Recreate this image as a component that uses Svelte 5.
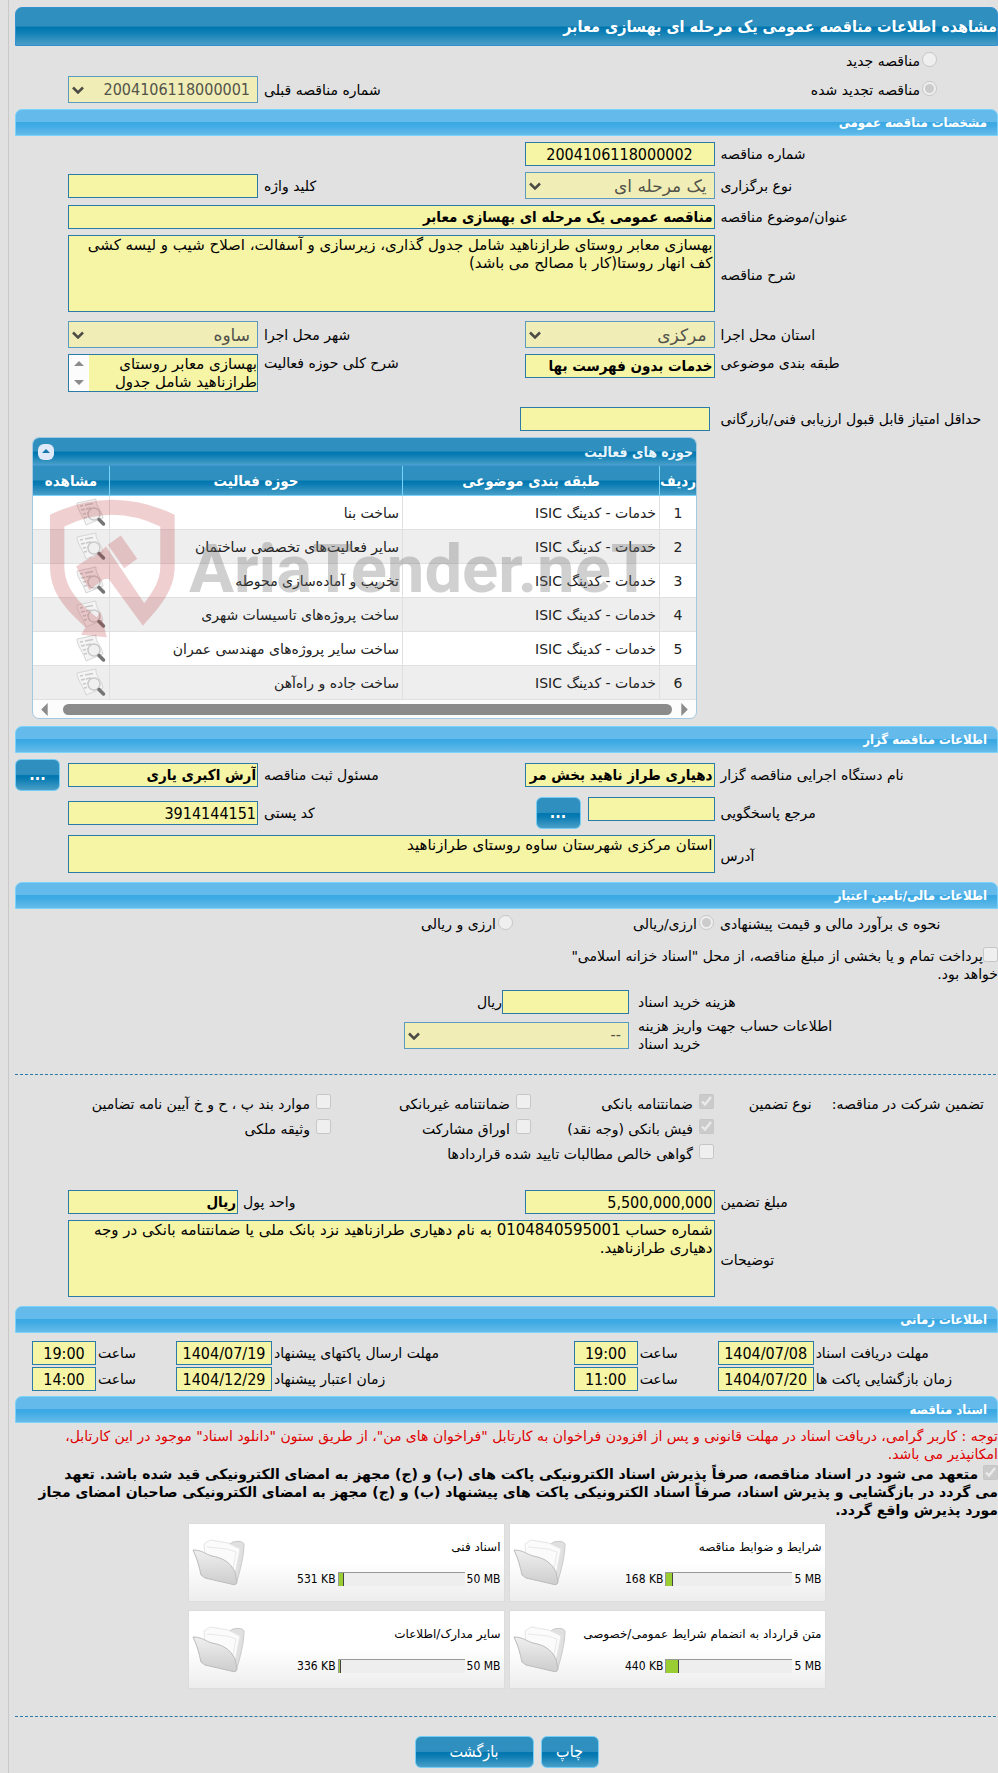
<script>
  const desc = 'بهسازی معابر روستای طرازناهید شامل جدول گذاری، زیرسازی و آسفالت، اصلاح شیب و لیسه کشی\nکف انهار روستا(کار با مصالح می باشد)';
  const scope = 'بهسازی معابر روستای\nطرازناهید شامل جدول';
  const address = 'استان مرکزی شهرستان ساوه روستای طرازناهید';
  const notes = 'شماره حساب 0104840595001 به نام دهیاری طرازناهید نزد بانک ملی یا ضمانتنامه بانکی در وجه\nدهیاری طرازناهید.';

  const areas = [
    'ساخت بنا',
    'سایر فعالیت‌های تخصصی ساختمان',
    'تخریب و آماده‌سازی محوطه',
    'ساخت پروژه‌های تاسیسات شهری',
    'ساخت سایر پروژه‌های مهندسی عمران',
    'ساخت جاده و راه‌آهن'
  ];

  const guarantees = [
    { id: 'g1', label: 'ضمانتنامه بانکی', checked: true },
    { id: 'g2', label: 'ضمانتنامه غیربانکی', checked: false },
    { id: 'g3', label: 'موارد بند پ ، ح و خ آیین نامه تضامین', checked: false },
    { id: 'g4', label: 'فیش بانکی (وجه نقد)', checked: true },
    { id: 'g5', label: 'اوراق مشارکت', checked: false },
    { id: 'g6', label: 'وثیقه ملکی', checked: false },
    { id: 'g7', label: 'گواهی خالص مطالبات تایید شده قراردادها', checked: false, wide: true }
  ];

  const dates = [
    { id: 'd1', label: 'مهلت دریافت اسناد', date: '1404/07/08', time: '19:00' },
    { id: 'd2', label: 'مهلت ارسال پاکتهای پیشنهاد', date: '1404/07/19', time: '19:00' },
    { id: 'd3', label: 'زمان بازگشایی پاکت ها', date: '1404/07/20', time: '11:00' },
    { id: 'd4', label: 'زمان اعتبار پیشنهاد', date: '1404/12/29', time: '14:00' }
  ];

  const files = [
    { title: 'شرایط و ضوابط مناقصه', max: '5 MB', used: '168 KB', fill: 5 },
    { title: 'اسناد فنی', max: '50 MB', used: '531 KB', fill: 4 },
    { title: 'متن قرارداد به انضمام شرایط عمومی/خصوصی', max: '5 MB', used: '440 KB', fill: 10 },
    { title: 'سایر مدارک/اطلاعات', max: '50 MB', used: '336 KB', fill: 2 }
  ];
</script>

{#snippet dropdown(id, value, number = false)}
  <span class="dropdown">
    <select {id} class:num={number} disabled><option>{value}</option></select>
    <svg class="chevron" viewBox="0 0 12 8" aria-hidden="true"><path d="M1 1.500 6 6.500l5-5" /></svg>
  </span>
{/snippet}

{#snippet docIcon()}
  <svg class="doc" viewBox="0 0 30 30" aria-hidden="true">
    <path d="M1 5 20 1c-1 7 6 11 7 19l-17 7C8 19 1 12 1 5z" fill="#f4f4f4" stroke="#d6d6d6" />
    <path d="M4 8l3-.6M5 12l4-.8M7 16l3-.6M8 20l3-.6M9 7l8-1.600M10 11l5-.9M11 15l2-.4" stroke="#c9c9c9" stroke-width="1.500" />
    <circle cx="18" cy="16" r="6" fill="#efefef" fill-opacity=".85" stroke="#cacaca" stroke-width="1.500" />
    <path d="M23 21.500 27.500 26" stroke="#757575" stroke-width="3.500" stroke-linecap="round" />
  </svg>
{/snippet}

<svelte:head><title>مناقصه عمومی</title></svelte:head>

<main dir="rtl">
  <h1>مشاهده اطلاعات مناقصه عمومی یک مرحله ای بهسازی معابر</h1>

  <div class="kind">
    <span class="opt"><input type="radio" id="new" name="kind" disabled /><label for="new">مناقصه جدید</label></span>
    <span class="opt"><input type="radio" id="renewed" name="kind" checked disabled /><label for="renewed">مناقصه تجدید شده</label></span>
    <label class="end" for="prev">شماره مناقصه قبلی</label>
    {@render dropdown('prev', '2004106118000001', true)}
  </div>

  <section class="specs">
    <h2>مشخصات مناقصه عمومی</h2>
    <div class="form">
      <label for="num">شماره مناقصه</label>
      <input class="center num" id="num" value="2004106118000002" readonly />

      <label class="first" for="type">نوع برگزاری</label>
      {@render dropdown('type', 'یک مرحله ای')}
      <label for="key">کلید واژه</label>
      <input id="key" readonly />

      <label class="first" for="subject">عنوان/موضوع مناقصه</label>
      <input class="full strong" id="subject" value="مناقصه عمومی یک مرحله ای بهسازی معابر" readonly />

      <label class="first" for="desc">شرح مناقصه</label>
      <textarea class="full tall" id="desc" readonly value={desc}></textarea>

      <label class="first" for="province">استان محل اجرا</label>
      {@render dropdown('province', 'مرکزی')}
      <label for="city">شهر محل اجرا</label>
      {@render dropdown('city', 'ساوه')}

      <label class="first top" for="class">طبقه بندی موضوعی</label>
      <input class="top strong" id="class" value="خدمات بدون فهرست بها" readonly />
      <label class="top" for="scope">شرح کلی حوزه فعالیت</label>
      <div class="scroller">
        <textarea id="scope" readonly value={scope}></textarea>
        <svg viewBox="0 0 20 36" aria-hidden="true"><path d="M5 11h10l-5-5zM5 25h10l-5 5z" /></svg>
      </div>

      <label class="first score" for="score">حداقل امتیاز قابل قبول ارزیابی فنی/بازرگانی</label>
      <span class="score-field"><input id="score" readonly /></span>
    </div>

    <div class="panel">
      <div class="panel-title">
        <span>حوزه های فعالیت</span>
        <button class="collapse" aria-label="بستن">
          <svg viewBox="0 0 16 16"><path d="M4 9 8 5l4 4z" /></svg>
        </button>
      </div>
      <table>
        <thead>
          <tr>
            <th class="c-row">ردیف</th>
            <th class="c-class">طبقه بندی موضوعی</th>
            <th>حوزه فعالیت</th>
            <th class="c-view">مشاهده</th>
          </tr>
        </thead>
        <tbody>
          {#each areas as area, i}
            <tr>
              <td class="idx">{i + 1}</td>
              <td>خدمات - کدینگ ISIC</td>
              <td>{area}</td>
              <td class="view">{@render docIcon()}</td>
            </tr>
          {/each}
        </tbody>
      </table>
      <div class="hscroll" aria-hidden="true">
        <svg viewBox="0 0 8 14"><path d="M0 0v14l7-7z" /></svg>
        <span></span>
        <svg viewBox="0 0 8 14"><path d="M8 0v14L1 7z" /></svg>
      </div>

      <!-- Site watermark over the rows -->
      <div class="watermark" dir="ltr" aria-hidden="true">
        <svg viewBox="150 208 374 416">
          <path d="M150 255Q335 166 523 255V410C523 480 480 530 428 587L325 447 307 448 272 388 318 350 432 520C462 480 480 450 480 410V290Q335 220 193 290V410C193 465 225 510 290 562L300 545 320 622 243 614 256 592C200 540 150 490 150 410z" />
          <path d="M228 410 275 380 315 445 268 480zM323 345 362 317 411 387 372 415z" />
        </svg>
        <span>AriaTender.neT</span>
      </div>
    </div>
  </section>

  <section>
    <h2>اطلاعات مناقصه گزار</h2>
    <div class="form">
      <label for="org">نام دستگاه اجرایی مناقصه گزار</label>
      <input class="strong" id="org" value="دهیاری طراز ناهید بخش مر" readonly />
      <label for="owner">مسئول ثبت مناقصه</label>
      <input class="strong" id="owner" value="آرش اکبری یاری" readonly />
      <button class="btn more">...</button>

      <label class="first" for="contact">مرجع پاسخگویی</label>
      <div class="pair">
        <input id="contact" readonly />
        <button class="btn more">...</button>
      </div>
      <label for="zip">کد پستی</label>
      <input class="num" id="zip" value="3914144151" readonly />

      <label class="first" for="address">آدرس</label>
      <textarea class="full low" id="address" readonly value={address}></textarea>
    </div>
  </section>

  <section>
    <h2>اطلاعات مالی/تامین اعتبار</h2>
    <div class="estimate">
      <span class="lead">نحوه ی برآورد مالی و قیمت پیشنهادی</span>
      <span class="opt"><input type="radio" id="cur1" name="cur" checked disabled /><label for="cur1">ارزی/ریالی</label></span>
      <span class="opt"><input type="radio" id="cur2" name="cur" disabled /><label for="cur2">ارزی و ریالی</label></span>
    </div>

    <div class="treasury">
      <input type="checkbox" id="treasury" disabled /><label for="treasury">پرداخت تمام و یا بخشی از مبلغ مناقصه، از محل "اسناد خزانه اسلامی" خواهد بود.</label>
    </div>

    <div class="cost">
      <label for="cost">هزینه خرید اسناد</label>
      <div class="pair tight"><input id="cost" readonly /><span>ریال</span></div>
      <label for="account">اطلاعات حساب جهت واریز هزینه خرید اسناد</label>
      {@render dropdown('account', '--', true)}
    </div>

    <hr />

    <div class="guarantee">
      <div class="heads"><span>تضمین شرکت در مناقصه:</span><span>نوع تضمین</span></div>
      <div class="checks">
        {#each guarantees as g}
          <span class="opt" class:wide={g.wide}>
            <input type="checkbox" id={g.id} checked={g.checked} disabled /><label for={g.id}>{g.label}</label>
          </span>
        {/each}
      </div>
    </div>

    <div class="form">
      <label for="amount">مبلغ تضمین</label>
      <input class="num" id="amount" value="5,500,000,000" readonly />
      <div class="unit">
        <label for="unit">واحد پول</label>
        <input class="strong" id="unit" value="ریال" readonly />
      </div>

      <label class="first" for="notes">توضیحات</label>
      <textarea class="full tall" id="notes" readonly value={notes}></textarea>
    </div>
  </section>

  <section>
    <h2>اطلاعات زمانی</h2>
    <div class="dates">
      {#each dates as d, i}
        <label class:first={i % 2 === 0} for={d.id}>{d.label}</label>
        <input class="center num" id={d.id} value={d.date} readonly />
        <label for="{d.id}-time">ساعت</label>
        <input class="center num" id="{d.id}-time" value={d.time} readonly />
      {/each}
    </div>
  </section>

  <section>
    <h2>اسناد مناقصه</h2>
    <p class="warning">
      توجه : کاربر گرامی، دریافت اسناد در مهلت قانونی و پس از افزودن فراخوان به کارتابل "فراخوان های من"، از طریق ستون "دانلود اسناد" موجود در این کارتابل، امکانپذیر می باشد.
    </p>
    <div class="pledge">
      <input type="checkbox" id="pledge" checked disabled />
      <label for="pledge">متعهد می شود در اسناد مناقصه، صرفاً پذیرش اسناد الکترونیکی پاکت های (ب) و (ج) مجهز به امضای الکترونیکی قید شده باشد. تعهد<br />می گردد در بازگشایی و پذیرش اسناد، صرفاً اسناد الکترونیکی پاکت های پیشنهاد (ب) و (ج) مجهز به امضای الکترونیکی صاحبان امضای مجاز مورد پذیرش واقع گردد.</label>
    </div>

    <div class="files">
      {#each files as f}
        <div class="file">
          <div class="info">
            <span>{f.title}</span>
            <div class="usage">
              <span dir="ltr">{f.max}</span>
              <div class="meter"><div class="fill" style="width:{f.fill}%"></div></div>
              <span dir="ltr">{f.used}</span>
            </div>
          </div>
          <svg class="folder" viewBox="0 0 54 50" aria-hidden="true">
            <defs>
              <linearGradient id="front" x1="0" y1="0" x2="0" y2="1">
                <stop offset="0" stop-color="#efefef" />
                <stop offset="1" stop-color="#cdcdcd" />
              </linearGradient>
            </defs>
            <path d="M36 7 41 4Q50 2 52 6C52 18 48 33 44 46L14 36z" fill="#e0e0e0" stroke="#cacaca" />
            <path d="M12 6 18 2l18 3 12 6-6 30-28-8z" fill="#fbfbfb" stroke="#e6e6e6" />
            <path d="M15 9l20 2 9 3-4 22" fill="none" stroke="#e9e9e9" />
            <path d="M1 12C10 12 13 16 20 18 31 20 38 24 43 34L45 44Q44 48 39 46L13 40 9 37C7 28 5 20 1 12z" fill="url(#front)" stroke="#bcbcbc" />
          </svg>
        </div>
      {/each}
    </div>
  </section>

  <hr class="last" />

  <footer>
    <button class="btn print">چاپ</button>
    <button class="btn back">بازگشت</button>
  </footer>
</main>

<style>
  :global(body) {
    background: #e1e1e1;
    overflow-x: hidden;
  }

  main {
    --yellow: #f6f4a5;
    --edge: #2a7ba8;
    --narrow: 'DejaVu Sans Condensed', 'DejaVu Sans', sans-serif;
    --deep: linear-gradient(#2f90bf 0%, #2f90bf 48%, #0076af 52%, #0c7db4 64%, #4a9fc7 100%);
    margin-left: 8px;
    padding: 7px 0 5px 6px;
    border-left: 1px solid #c9c9c9;
    font: 14px/18px 'DejaVu Sans', sans-serif;
    color: #000;
  }

  main * {
    box-sizing: border-box;
  }

  h1, h2 {
    margin: 0;
    display: flex;
    align-items: center;
    color: #fff;
    font-family: var(--narrow);
    font-weight: bold;
    border-radius: 7px 7px 0 0;
  }

  h1 {
    height: 39px;
    font-size: 16px;
    border: 1px solid #3391d3;
    background: var(--deep);
  }

  h2 {
    height: 27px;
    padding: 0 10px;
    font-size: 13px;
    border: 1px solid #79d3fa;
    background: linear-gradient(#64baea 0%, #64baea 46%, #3aa8e3 50%, #3fabe4 62%, #66bbe9 100%);
  }

  .specs {
    margin-bottom: 7px;
  }

  /* Fields */
  input:not([type]), textarea, select {
    width: 100%;
    margin: 0;
    padding: 0 1px;
    border: 1px solid var(--edge);
    border-radius: 0;
    background: var(--yellow);
    color: #000;
    font: 17px/20px 'DejaVu Sans', sans-serif;
    outline: none;
  }

  input:not([type]) {
    height: 24px;
  }

  input.num:not([type]), select.num {
    font-family: var(--narrow);
    font-size: 16px;
  }

  input.strong:not([type]) {
    font-family: var(--narrow);
    font-size: 15px;
    font-weight: bold;
  }

  textarea {
    display: block;
    resize: none;
    overflow: hidden;
    font-size: 15px;
    line-height: 18px;
  }

  .tall {
    height: 77px;
    margin-bottom: 3px;
  }

  .low {
    height: 38px;
    margin-bottom: 3px;
  }

  .center {
    text-align: center;
  }

  .dropdown {
    display: block;
    position: relative;
  }

  select {
    display: block;
    appearance: none;
    height: 27px;
    padding: 0 7px;
    border-color: #5b9cbe;
    background: #f0eeb6;
    color: #53534c;
    opacity: 1;
  }

  .chevron {
    position: absolute;
    left: 4px;
    top: 10px;
    width: 12px;
    height: 8px;
    fill: none;
    stroke: #4c4c46;
    stroke-width: 2.5;
  }

  input[type='radio'], input[type='checkbox'] {
    flex: none;
    width: 15px;
    height: 15px;
    margin: 0;
  }

  .opt {
    display: flex;
    gap: 2px;
    align-items: flex-start;
  }

  .opt label {
    white-space: nowrap;
  }

  .form, .kind {
    display: grid;
    grid-template-columns: minmax(0, 284fr) 190px minmax(0, 267fr) 190px 53px;
    align-items: center;
    row-gap: 6px;
    padding: 6px 0;
  }

  .form > label, .kind > .end {
    justify-self: end;
    padding-left: 6px;
    white-space: nowrap;
  }

  .form > .first {
    grid-column: 1;
  }

  .full {
    grid-column: 2 / 5;
  }

  .top {
    align-self: start;
  }

  .kind .opt {
    grid-column: 1;
    padding-right: 61px;
  }

  .kind > .end {
    grid-column: 3;
  }

  .scroller {
    display: flex;
    height: 38px;
    border: 1px solid var(--edge);
  }

  .scroller textarea {
    flex: 1;
    min-width: 0;
    border: 0;
    padding: 0;
  }

  .scroller svg {
    width: 20px;
    background: #fcfcfc;
    fill: #8b8b8b;
  }

  .form > .score {
    margin-top: 9px;
  }

  .score-field {
    display: block;
    margin-top: 9px;
    padding-right: 5px;
    margin-left: -5px;
  }

  .pair {
    display: flex;
    gap: 7px;
  }

  .pair input:not([type]) {
    width: 127px;
  }

  .tight {
    gap: 0;
    align-items: center;
  }

  .unit {
    grid-column: 3 / 5;
    display: flex;
    justify-content: flex-end;
    align-items: center;
    gap: 5px;
  }

  .unit input:not([type]) {
    width: 170px;
  }

  /* Activity grid */
  .panel {
    position: relative;
    width: 665px;
    max-width: 100%;
    margin: 0 auto 0 17px;
    border: 1px solid #a3c9e2;
    border-radius: 7px;
    overflow: hidden;
    background: #fcfcfc;
  }

  .panel-title {
    display: flex;
    justify-content: space-between;
    align-items: center;
    height: 28px;
    padding: 0 3px 0 5px;
    background: var(--deep);
    border-bottom: 1px solid #3f97d6;
    color: #e8f4fb;
    font-family: var(--narrow);
    font-weight: bold;
  }

  .collapse {
    width: 16px;
    height: 16px;
    padding: 0;
    border: 0;
    border-radius: 6px;
    background: #dfe9f7;
  }

  .collapse svg {
    display: block;
    fill: #1478ad;
  }

  table {
    width: 100%;
    table-layout: fixed;
    border-collapse: separate;
    border-spacing: 0;
    color: #222;
  }

  th {
    height: 30px;
    padding: 0;
    background: var(--deep);
    border-bottom: 1px solid #79d3fa;
    border-left: 1px solid #79d3fa;
    color: #fff;
    font-family: var(--narrow);
    font-size: 15px;
  }

  th:last-child, td:last-child {
    border-left: 0;
  }

  .c-row { width: 37px; }
  .c-class { width: 257px; }
  .c-view { width: 76px; }

  td {
    height: 34px;
    padding: 0 3px;
    border-bottom: 1px solid #e0e0e0;
    border-left: 1px solid #e0e0e0;
  }

  tbody tr:nth-child(odd) { background: #fff; }
  tbody tr:nth-child(even) { background: #eee; }

  .idx {
    text-align: center;
  }

  .doc {
    display: block;
    width: 30px;
    height: 30px;
    fill: none;
  }

  .hscroll {
    display: flex;
    align-items: center;
    gap: 9px;
    height: 18px;
    padding: 0 7px;
  }

  .hscroll span {
    flex: 1;
    height: 11px;
    margin-left: 6px;
    border-radius: 6px;
    background: #8b8b8b;
  }

  .hscroll svg {
    width: 8px;
    height: 13px;
    fill: #8b8b8b;
  }

  .watermark {
    position: absolute;
    left: 17px;
    top: 61px;
    display: flex;
    align-items: center;
    gap: 14px;
    pointer-events: none;
  }

  .watermark svg {
    width: 125px;
    height: 139px;
    fill: #b8282c;
    opacity: 0.22;
  }

  .watermark span {
    font: bold 67px/90px Roboto, sans-serif;
    color: #666;
    opacity: 0.3;
  }

  /* Buttons */
  .btn {
    height: 32px;
    padding: 0;
    border: 1px solid #74cdf5;
    border-radius: 6px;
    background: var(--deep);
    color: #fff;
    font: 16px/20px var(--narrow);
  }

  .more {
    width: 45px;
    flex: none;
    justify-self: end;
    font-weight: bold;
  }

  /* Finance */
  .estimate {
    display: grid;
    grid-template-columns: minmax(0, 284fr) 201px minmax(0, 498fr);
    padding: 6px 0 9px;
  }

  .lead {
    justify-self: end;
    padding-left: 6px;
  }

  .treasury {
    max-width: 455px;
    padding: 5px 0 7px;
  }

  .treasury input {
    vertical-align: top;
  }

  .cost {
    display: grid;
    grid-template-columns: minmax(0, 369fr) 225px minmax(0, 389fr);
    row-gap: 3px;
    align-items: center;
  }

  .cost > label {
    grid-column: 1;
    justify-self: end;
    max-width: 215px;
    padding-left: 9px;
    text-align: left;
  }

  hr {
    margin: 21px 2px 17px 0;
    border: 0;
    border-top: 1px dashed #2a7ba8;
  }

  .last {
    margin-top: 27px;
  }

  .guarantee {
    display: grid;
    grid-template-columns: minmax(0, 284fr) minmax(0, 699fr);
    line-height: 25px;
    margin-bottom: 17px;
  }

  .heads {
    display: flex;
    gap: 20px;
    padding-right: 14px;
    white-space: nowrap;
  }

  .checks {
    display: grid;
    grid-template-columns: 183px 200px 1fr;
  }

  .checks .opt {
    gap: 6px;
  }

  .checks input {
    margin-top: 2px;
  }

  .wide {
    grid-column: 1 / -1;
  }

  /* Dates */
  .dates {
    display: grid;
    grid-template-columns: minmax(0, 184fr) 96px 80px 64px minmax(0, 301fr) 96px 80px 64px 17px;
    align-items: center;
    row-gap: 2px;
    padding: 8px 0 5px;
  }

  .dates label {
    justify-self: end;
    padding-left: 2px;
    white-space: nowrap;
  }

  .dates .first {
    grid-column: 1;
  }

  /* Documents */
  .warning {
    margin: 0;
    padding: 4px 0 2px;
    color: #e00000;
  }

  .pledge {
    font-weight: bold;
  }

  .pledge input {
    vertical-align: top;
  }

  .files {
    display: grid;
    grid-template-columns: 317px 317px;
    justify-content: center;
    gap: 8px 4px;
    padding-top: 4px;
  }

  .file {
    display: flex;
    justify-content: space-between;
    align-items: center;
    height: 79px;
    padding: 0 3px;
    border: 1px solid #dcdcdc;
    background: linear-gradient(#fff 50%, #ededed);
    font-size: 12px;
  }

  .info {
    display: grid;
    gap: 14px;
  }

  .usage {
    display: flex;
    align-items: center;
    gap: 2px;
    font-family: var(--narrow);
  }

  .meter {
    direction: ltr;
    width: 127px;
    height: 14px;
    border-top: 1px solid #999;
    border-left: 1px solid #999;
    background: #eee;
  }

  .fill {
    height: 100%;
    background: #9acd32;
    border-right: 1px solid #444;
  }

  .folder {
    width: 54px;
    height: 50px;
  }

  footer {
    display: flex;
    justify-content: center;
    gap: 7px;
    padding-top: 2px;
  }

  .print { width: 58px; }
  .back { width: 119px; }
</style>
